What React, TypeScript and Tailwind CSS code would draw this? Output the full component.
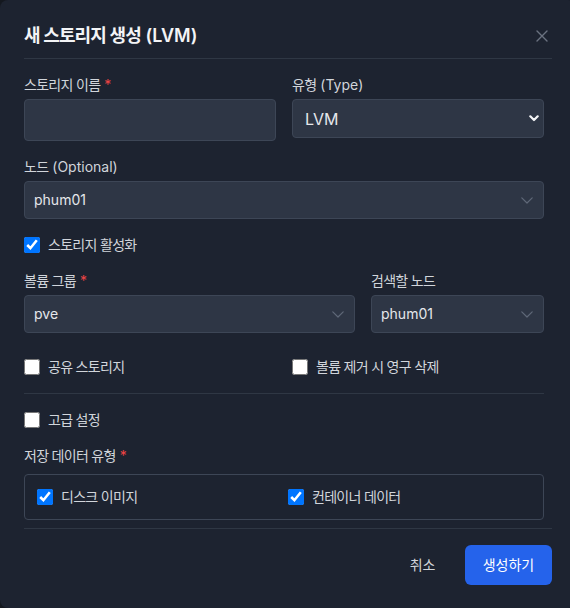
import React from "react";

const font = { fontFamily: "Inter, 'Noto Sans CJK KR', 'Noto Sans', sans-serif" };

function K({ children }: { children: React.ReactNode }) {
  return <span className="tracking-[-0.05em]">{children}</span>;
}

function Chevron() {
  return (
    <svg width="12" height="7" viewBox="0 0 12 7" fill="none" className="shrink-0">
      <path d="M0.8 0.8L6 6L11.2 0.8" stroke="#5f6878" strokeWidth="1.2" strokeLinecap="round" strokeLinejoin="round" />
    </svg>
  );
}

function FakeSelect({ value }: { value: string }) {
  return (
    <div className="h-[38px] w-full rounded border border-[#3d4656] bg-[#2e3645] flex items-center justify-between pl-[9px] pr-[10px]">
      <span className="text-sm text-[#e5e7eb]">{value}</span>
      <Chevron />
    </div>
  );
}

function Label({ children, req, mb = "mb-1" }: { children: React.ReactNode; req?: boolean; mb?: string }) {
  return (
    <div className={`text-sm leading-5 text-[#d1d5db] ${mb}`}>
      {children}
      {req && <span className="text-[#ef4444] ml-1">*</span>}
    </div>
  );
}

function Check({ label, checked }: { label: string; checked?: boolean }) {
  return (
    <label className="flex items-center gap-2 h-5">
      <input type="checkbox" defaultChecked={checked} className="w-4 h-4 m-0 shrink-0" />
      <span className="text-sm leading-5 text-[#d1d5db] tracking-[-0.05em]">{label}</span>
    </label>
  );
}

export default function App() {
  return (
    <div className="w-[570px] h-[608px] overflow-hidden bg-[#14181f]" style={font}>
      <div className="w-[576px] h-[608px] rounded-lg bg-[#1d2330] flex flex-col">
        <div className="mx-6 pt-[22px] pb-2 border-b border-[#2f3744] flex items-center justify-between">
          <h2 className="text-lg leading-7 font-semibold text-[#f3f4f6]">
            <span className="tracking-[-0.05em]">새 스토리지 생성</span> (LVM)
          </h2>
          <svg width="12" height="12" viewBox="0 0 12 12" fill="none" className="mr-[4px]">
            <path d="M1 1L11 11M11 1L1 11" stroke="#6b7280" strokeWidth="1.4" strokeLinecap="round" />
          </svg>
        </div>

        <div className="flex-1 pl-6 pr-8 pt-4 flex flex-col gap-4">
          <div className="grid grid-cols-2 gap-4">
            <div>
              <Label req><K>스토리지 이름</K></Label>
              <input className="h-[42px] w-full rounded border border-[#3d4656] bg-[#2e3645] outline-none" />
            </div>
            <div>
              <Label><K>유형</K> (Type)</Label>
              <div className="h-[39px] w-full rounded border border-[#3d4656] bg-[#2e3645] flex items-center justify-between pl-3 pr-[4px]">
                <span className="text-base text-[#e5e7eb]">LVM</span>
                <svg width="10" height="7" viewBox="0 0 10 7" fill="none">
                  <path d="M1.3 1.3L5 5L8.7 1.3" stroke="#f3f4f6" strokeWidth="2.2" strokeLinecap="round" strokeLinejoin="round" />
                </svg>
              </div>
            </div>
          </div>

          <div>
            <Label><K>노드</K> (Optional)</Label>
            <FakeSelect value="phum01" />
          </div>

          <Check label="스토리지 활성화" checked />

          <div className="grid grid-cols-[1fr_173px] gap-4">
            <div>
              <Label req><K>볼륨 그룹</K></Label>
              <FakeSelect value="pve" />
            </div>
            <div>
              <Label><K>검색할 노드</K></Label>
              <FakeSelect value="phum01" />
            </div>
          </div>

          <div className="grid grid-cols-2 gap-4 pt-2">
            <Check label="공유 스토리지" />
            <Check label="볼륨 제거 시 영구 삭제" />
          </div>

          <div className="border-t border-[#2f3744]" />

          <Check label="고급 설정" />

          <div>
            <Label req mb="mb-2"><K>저장 데이터 유형</K></Label>
            <div className="rounded border border-[#3d4656] p-3 grid grid-cols-2 gap-2">
              <Check label="디스크 이미지" checked />
              <Check label="컨테이너 데이터" checked />
            </div>
          </div>
        </div>

        <div className="mx-6 border-t border-[#2f3744] pt-4 pb-[23px] flex justify-end items-center gap-3">
          <button className="h-10 pl-4 pr-[18px] text-sm text-[#d1d5db] tracking-[-0.02em]">취소</button>
          <button className="h-10 w-[87px] rounded-md bg-[#2563eb] text-sm text-white">생성하기</button>
        </div>
      </div>
    </div>
  );
}
